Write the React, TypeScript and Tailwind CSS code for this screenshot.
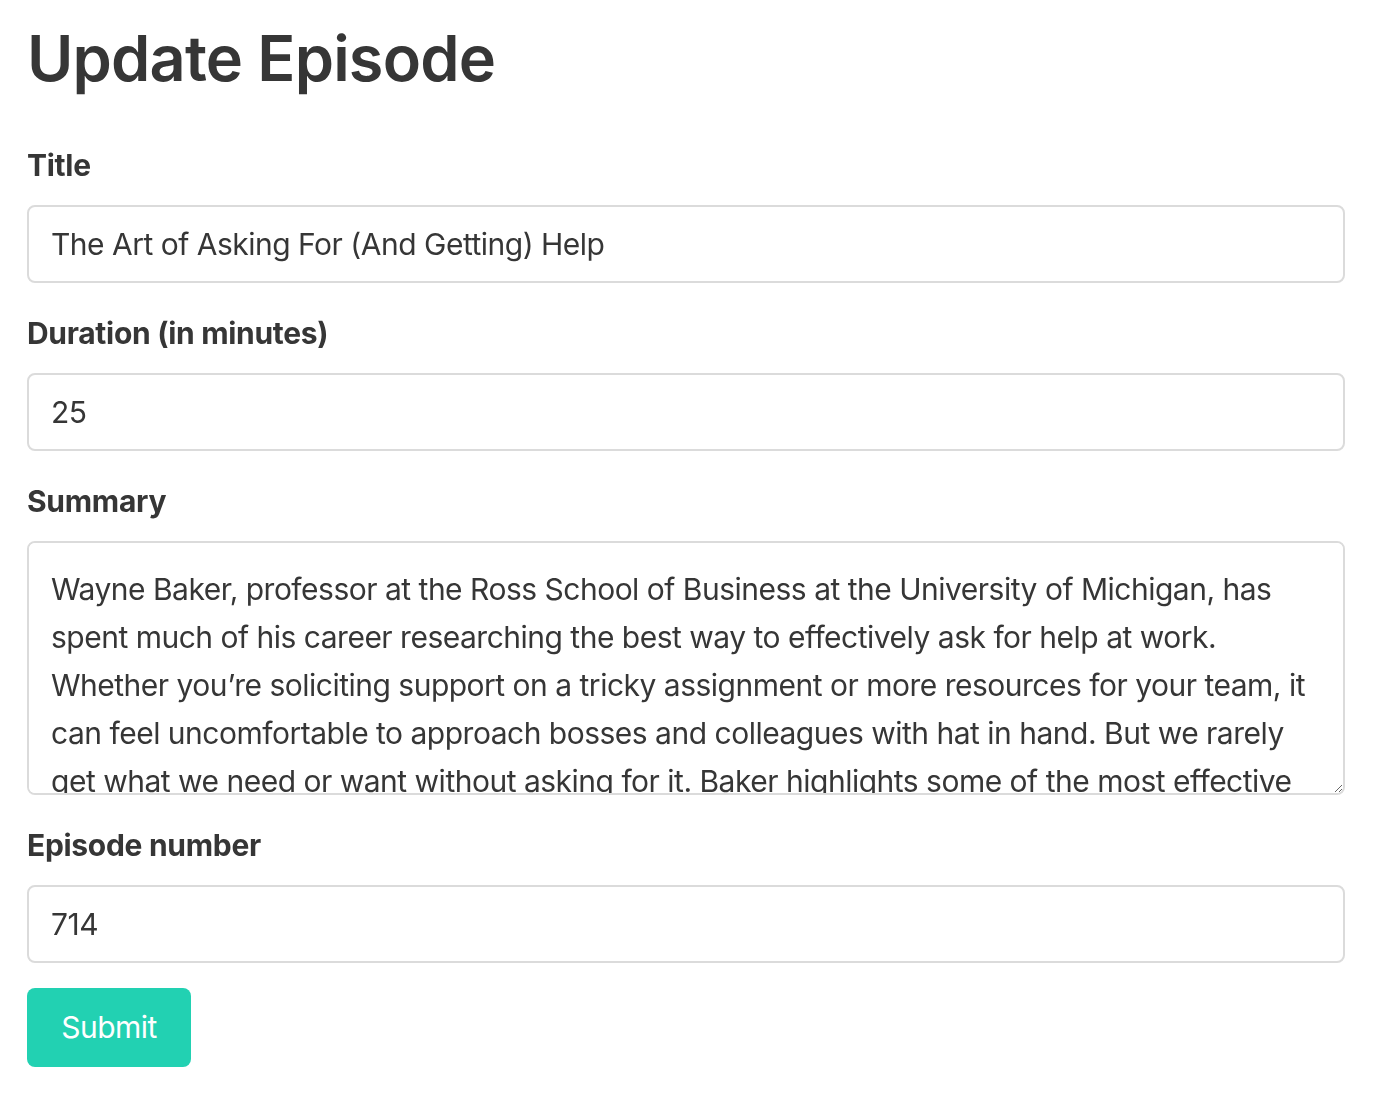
import React, { useState } from "react";

const summaryText =
  "Wayne Baker, professor at the Ross School of Business at the University of Michigan, has spent much of his career researching the best way to effectively ask for help at work. Whether you’re soliciting support on a tricky assignment or more resources for your team, it can feel uncomfortable to approach bosses and colleagues with hat in hand. But we rarely get what we need or want without asking for it. Baker highlights some of the most effective ways to make a request.";

const inputClass =
  "block h-[78px] w-full rounded-[8px] border-2 border-[#dbdbdb] bg-white px-[22px] text-[30px] tracking-[-0.5px] text-[#363636] outline-none";

const labelClass =
  "mb-[16px] block h-[48px] text-[30px] font-bold leading-[48px] tracking-[-0.3px] text-[#363636]";

const Field = ({
  label,
  className,
  children,
}: {
  label: string;
  className?: string;
  children: React.ReactNode;
}) => {
  return (
    <div className={className ?? "mb-[26px]"}>
      <label className={labelClass}>{label}</label>
      {children}
    </div>
  );
};

export default function App() {
  const [title, setTitle] = useState("The Art of Asking For (And Getting) Help");
  const [duration, setDuration] = useState("25");
  const [summary, setSummary] = useState(summaryText);
  const [episode, setEpisode] = useState("714");

  return (
    <div className="min-h-[1116px] bg-white font-['Inter',sans-serif] text-[#363636]">
      <form
        className="ml-[27px] w-[1318px] pt-[22px]"
        onSubmit={(e) => e.preventDefault()}
      >
        <h1 className="mb-[47px] text-[63px] font-semibold leading-[72px] tracking-[-0.8px] text-[#363636]">
          Update Episode
        </h1>

        <Field label="Title">
          <input
            className={inputClass}
            value={title}
            onChange={(e) => setTitle(e.target.value)}
          />
        </Field>

        <Field label="Duration (in minutes)">
          <input
            className={inputClass}
            value={duration}
            onChange={(e) => setDuration(e.target.value)}
          />
        </Field>

        <Field label="Summary">
          <textarea
            className="block h-[254px] w-full resize-y rounded-[8px] border-2 border-[#dbdbdb] bg-white px-[22px] pt-[22px] text-[30px] leading-[48px] tracking-[-0.5px] text-[#363636] outline-none [scrollbar-width:none]"
            value={summary}
            onChange={(e) => setSummary(e.target.value)}
          />
        </Field>

        <Field label="Episode number" className="mb-[25px]">
          <input
            className={inputClass}
            value={episode}
            onChange={(e) => setEpisode(e.target.value)}
          />
        </Field>

        <button
          type="submit"
          className="h-[79px] w-[164px] rounded-[8px] bg-[#22d1b2] text-[30px] tracking-[-0.5px] text-white"
        >
          Submit
        </button>
      </form>
    </div>
  );
}
